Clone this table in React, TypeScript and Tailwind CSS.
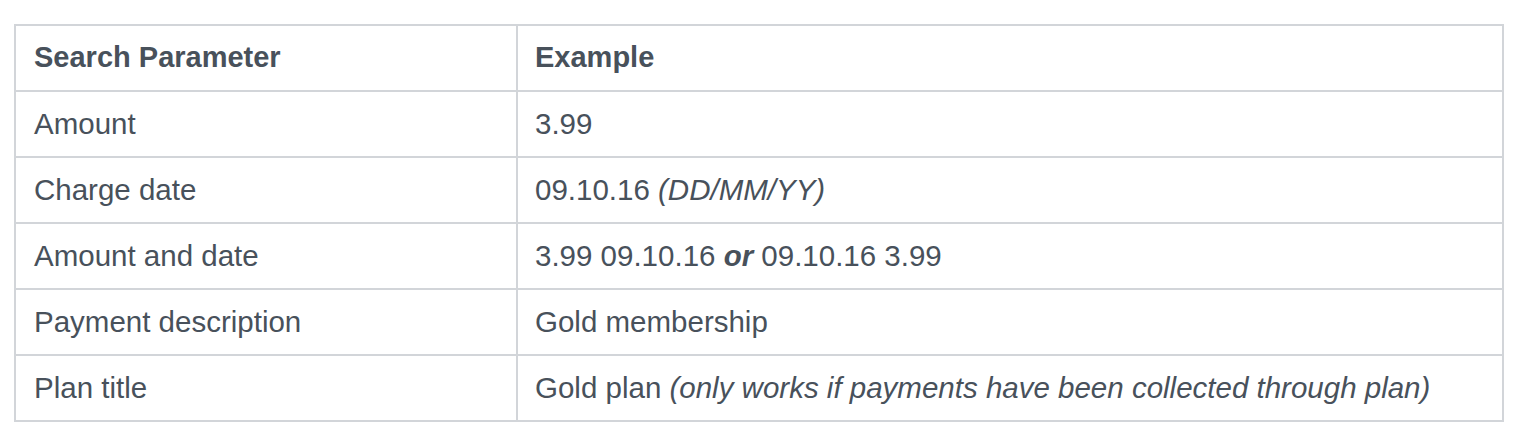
import React from "react";

const rows: { p: string; e: React.ReactNode }[] = [
  { p: "Amount", e: "3.99" },
  {
    p: "Charge date",
    e: (
      <>
        09.10.16 <i>(DD/MM/YY)</i>
      </>
    ),
  },
  {
    p: "Amount and date",
    e: (
      <>
        3.99 09.10.16 <b className="font-bold italic">or</b> 09.10.16 3.99
      </>
    ),
  },
  { p: "Payment description", e: "Gold membership" },
  {
    p: "Plan title",
    e: (
      <>
        Gold plan <i>(only works if payments have been collected through plan)</i>
      </>
    ),
  },
];

export default function App() {
  return (
    <div
      className="w-[1526px] h-[440px] bg-white pt-[24px] pl-[14px] text-[#48515b]"
      style={{ fontFamily: '"Liberation Sans", Arial, sans-serif' }}
    >
      <div className="w-[1490px] border-2 border-[#d2d5d9] text-[29.5px]">
        <div className="flex h-[64px] items-center font-bold text-[29px]">
          <div className="w-[502px] h-full flex items-center border-r-2 border-[#d2d5d9] pl-[18px]">
            Search Parameter
          </div>
          <div className="pl-[17px]">Example</div>
        </div>
        {rows.map((r) => (
          <div
            key={r.p}
            className="flex h-[66px] items-center border-t-2 border-[#d2d5d9]"
          >
            <div className="w-[502px] h-full flex items-center border-r-2 border-[#d2d5d9] pl-[18px]">
              {r.p}
            </div>
            <div className="pl-[17px]">{r.e}</div>
          </div>
        ))}
      </div>
    </div>
  );
}
